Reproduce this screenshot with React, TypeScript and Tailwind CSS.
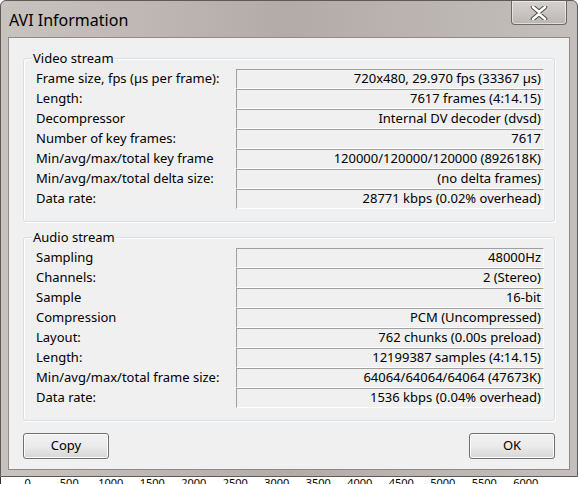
import React from 'react';

const font = { fontFamily: '"Noto Sans", "Open Sans", "DejaVu Sans", sans-serif' };

const video: [string, string][] = [
  ['Frame size, fps (µs per frame):', '720x480, 29.970 fps (33367 µs)'],
  ['Length:', '7617 frames (4:14.15)'],
  ['Decompressor', 'Internal DV decoder (dvsd)'],
  ['Number of key frames:', '7617'],
  ['Min/avg/max/total key frame', '120000/120000/120000 (892618K)'],
  ['Min/avg/max/total delta size:', '(no delta frames)'],
  ['Data rate:', '28771 kbps (0.02% overhead)'],
];

const audio: [string, string][] = [
  ['Sampling', '48000Hz'],
  ['Channels:', '2 (Stereo)'],
  ['Sample', '16-bit'],
  ['Compression', 'PCM (Uncompressed)'],
  ['Layout:', '762 chunks (0.00s preload)'],
  ['Length:', '12199387 samples (4:14.15)'],
  ['Min/avg/max/total frame size:', '64064/64064/64064 (47673K)'],
  ['Data rate:', '1536 kbps (0.04% overhead)'],
];

const ruler = ['0', '500', '1000', '1500', '2000', '2500', '3000', '3500', '4000', '4500', '5000', '5500', '6000'];

function Group({ title, rows }: { title: string; rows: [string, string][] }) {
  return (
    <div className="relative mx-[14px] rounded-[3px] border border-[#d5dfe5] pt-[10px] pb-[12px] shadow-[inset_1px_1px_0_#fff,1px_1px_0_#fff]">
      <span className="absolute left-[8px] top-[-10px] bg-[#f0f0f0] px-[1px] text-[13px] leading-[18px] text-black">
        {title}
      </span>
      <div className="flex flex-col">
        {rows.map(([label, value]) => (
          <div key={label} className="flex h-[20px] items-center">
            <div className="w-[212px] pl-[12px] text-[13px] text-black">{label}</div>
            <div className="flex h-[20px] w-[308px] items-center justify-end border-t border-l border-t-[#a0a0a0] border-l-[#a0a0a0] border-b border-r border-b-white border-r-white pr-[2px] text-[13px] text-black">
              {value}
            </div>
          </div>
        ))}
      </div>
    </div>
  );
}

function Button({ label }: { label: string }) {
  return (
    <button className="flex h-[26px] w-[86px] items-center justify-center rounded-[3px] border border-[#707070] bg-gradient-to-b from-[#f2f2f2] via-[#ebebeb] to-[#d6d6d6] text-[13px] text-black shadow-[inset_0_0_0_1px_#fcfcfc]">
      {label}
    </button>
  );
}

export default function App() {
  return (
    <div className="relative h-[484px] w-[578px] overflow-hidden bg-white" style={font}>
      {/* Window frame */}
      <div className="flex h-[477px] w-[578px] flex-col rounded-t-[6px] border border-[#5e5a58] bg-gradient-to-r from-[#c9c3c0] via-[#b3aba8] to-[#c4bfbc] px-[7px] pb-[6px]">
        {/* Title bar */}
        <div className="flex h-[36px] items-start justify-between">
          <span className="pl-[1px] pt-[7px] text-[16px] text-black">AVI Information</span>
          <div className="mr-[3px] flex h-[24px] w-[56px] items-center justify-center rounded-b-[4px] border border-t-0 border-[#6d6866] bg-gradient-to-b from-[#d6d2d0] to-[#bcb6b3] shadow-[inset_0_0_0_1px_rgba(255,255,255,0.5)]">
            <svg width="18" height="14" viewBox="0 0 18 14">
              <path d="M3 1 L9 6 L15 1 M3 13 L9 8 L15 13" stroke="#4a4a4a" strokeWidth="4.5" fill="none" strokeLinecap="round" />
              <path d="M3 1 L9 6 L15 1 M3 13 L9 8 L15 13" stroke="#ffffff" strokeWidth="2.5" fill="none" strokeLinecap="round" />
            </svg>
          </div>
        </div>
        {/* Client area */}
        <div className="flex flex-1 flex-col border border-[#8f8a88] bg-[#f0f0f0] pt-[20px]">
          <Group title="Video stream" rows={video} />
          <div className="h-[15px]" />
          <Group title="Audio stream" rows={audio} />
          <div className="mt-[12px] flex justify-between px-[14px]">
            <Button label="Copy" />
            <Button label="OK" />
          </div>
        </div>
      </div>
      {/* Background window peeking out below */}
      <div className="flex h-[7px] items-start overflow-hidden border-l border-[#333] pl-[6px] text-[11px] leading-[12px] text-black">
        {ruler.map((n) => (
          <span key={n} className="w-[41.5px] shrink-0 text-center">{n}</span>
        ))}
      </div>
    </div>
  );
}
